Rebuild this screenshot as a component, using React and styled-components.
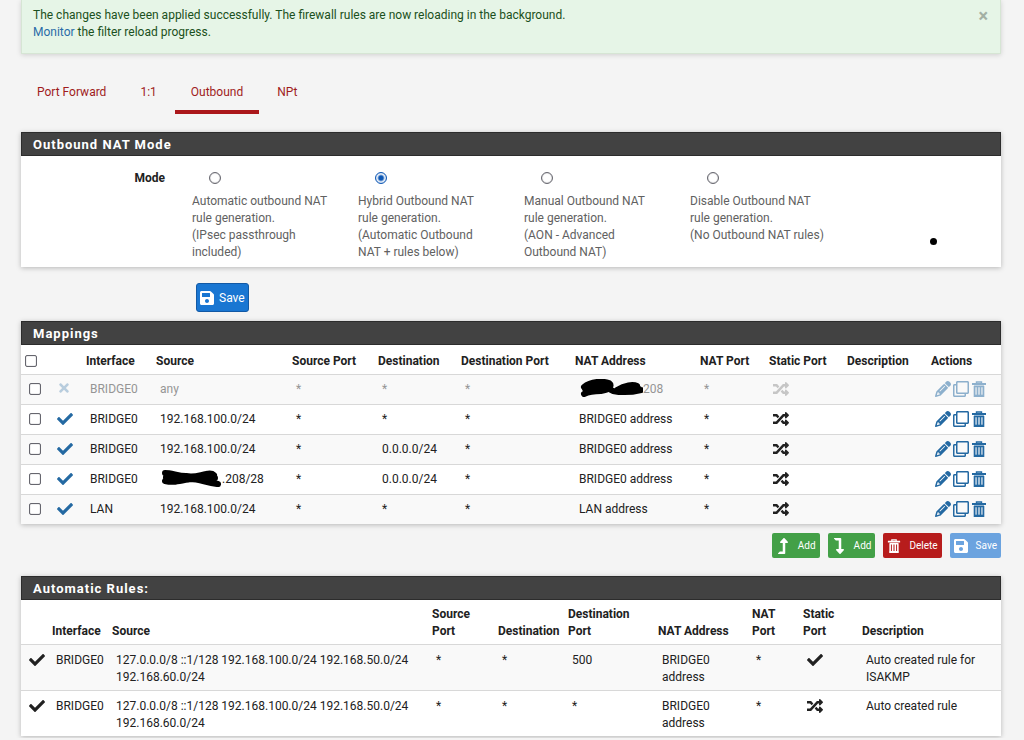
import { useState } from 'react'
import styled, { createGlobalStyle } from 'styled-components'
import {
    FaCheck,
    FaLevelDownAlt,
    FaLevelUpAlt,
    FaRandom,
    FaRegClone,
    FaSave,
    FaTimes,
} from 'react-icons/fa'
import { FaPencil } from 'react-icons/fa6'


const tabs = ['Port Forward', '1:1', 'Outbound', 'NPt']

const modes = [
    { id: 'automatic', lines: ['Automatic outbound NAT', 'rule generation.', '(IPsec passthrough', 'included)'] },
    { id: 'hybrid', lines: ['Hybrid Outbound NAT', 'rule generation.', '(Automatic Outbound', 'NAT + rules below)'] },
    { id: 'advanced', lines: ['Manual Outbound NAT', 'rule generation.', '(AON - Advanced', 'Outbound NAT)'] },
    { id: 'disabled', lines: ['Disable Outbound NAT', 'rule generation.', '(No Outbound NAT rules)'] },
]

const mappings = [
    { id: 0, disabled: true, iface: 'BRIDGE0', source: 'any', destination: '*', natAddress: '208', hidden: 'natAddress' },
    { id: 1, iface: 'BRIDGE0', source: '192.168.100.0/24', destination: '*', natAddress: 'BRIDGE0 address' },
    { id: 2, iface: 'BRIDGE0', source: '192.168.100.0/24', destination: '0.0.0.0/24', natAddress: 'BRIDGE0 address' },
    { id: 3, iface: 'BRIDGE0', source: '.208/28', destination: '0.0.0.0/24', natAddress: 'BRIDGE0 address', hidden: 'source' },
    { id: 4, iface: 'LAN', source: '192.168.100.0/24', destination: '*', natAddress: 'LAN address' },
]

const automaticSource = '127.0.0.0/8 ::1/128 192.168.100.0/24 192.168.50.0/24 192.168.60.0/24'

const automaticRules = [
    { id: 0, destinationPort: '500', isStatic: true, description: 'Auto created rule for ISAKMP' },
    { id: 1, destinationPort: '*', isStatic: false, description: 'Auto created rule' },
]

const mappingColumns = [28, 33, 70, 136, 86, 83, 114, 125, 69, 78, 84, null]
const automaticColumns = [27, 60, 320, 66, 70, 90, 94, 51, 59, null]


function Columns({ widths }) {
    return (
        <colgroup>
            {widths.map((width, index) => (
                <col key={index} style={width ? { width } : undefined} />
            ))}
        </colgroup>
    )
}


function TrashIcon() {
    return (
        <svg viewBox='0 0 16 16' fill='none' stroke='currentColor' aria-hidden='true'>
            <path d='M5.5 2.5 V1 H10.5 V2.5' strokeWidth='1.4' />
            <path d='M1 3 H15' strokeWidth='2' />
            <path d='M3.6 5 V15 H12.4 V5 M3 5.4 H13' strokeWidth='1.8' />
            <path d='M6.5 5 V15 M9.5 5 V15' strokeWidth='1.8' />
            <path d='M3 14.8 H13' strokeWidth='2.2' />
        </svg>
    )
}


function SourceScribble() {
    return (
        <Scribble width='62' height='18' viewBox='0 0 62 18' aria-hidden='true'>
            <path d='M5 4 C12 4 18 7 26 7 C34 9 40 6 46 5 C50 4 52 4 54 6 M5 12 C14 14 20 12 30 10 C40 10 46 14 57 15 M6 8 C18 9 36 9 55 9 M44 12 L58 15' />
        </Scribble>
    )
}


function AddressScribble() {
    return (
        <Scribble width='64' height='18' viewBox='0 0 64 18' aria-hidden='true'>
            <path d='M5 8 C12 2 24 2 30 4 C34 7 30 11 22 12 C14 12 9 13 5 15 M6 10 C16 7 26 7 34 12 C44 14 54 13 62 11 M38 11 C46 6 54 5 58 7 M44 10 L60 10' />
        </Scribble>
    )
}


function App() {

    // state
    const [mode, setMode] = useState('hybrid')
    const [selected, setSelected] = useState([])
    const [showAlert, setShowAlert] = useState(true)


    const handleToggle = (id) => {
        setSelected(selected.includes(id) ? selected.filter((item) => item !== id) : [...selected, id])
    }


    const handleToggleAll = () => {
        setSelected(selected.length === mappings.length ? [] : mappings.map((rule) => rule.id))
    }


    return (
        <Page>
            <GlobalStyle />

            {showAlert && (
                <Alert role='alert'>
                    <div>
                        The changes have been applied successfully. The firewall rules are now reloading in the background.
                        <br />
                        <a href='#monitor'>Monitor</a> the filter reload progress.
                    </div>
                    <CloseButton type='button' aria-label='Close' onClick={() => setShowAlert(false)}>×</CloseButton>
                </Alert>
            )}

            <Tabs>
                {tabs.map((tab) => (
                    <Tab key={tab} href='#nat' $active={tab === 'Outbound'}>{tab}</Tab>
                ))}
            </Tabs>

            <Panel>
                <PanelTitle>Outbound NAT Mode</PanelTitle>
                <ModeBody role='radiogroup' aria-labelledby='mode-label'>
                    <ModeLabel id='mode-label'>Mode</ModeLabel>
                    {modes.map((item) => (
                        <ModeOption key={item.id}>
                            <Radio
                                name='mode'
                                value={item.id}
                                checked={mode === item.id}
                                onChange={() => setMode(item.id)}
                            />
                            {item.lines.map((line) => (
                                <span key={line}>{line}</span>
                            ))}
                        </ModeOption>
                    ))}
                    <Dot />
                </ModeBody>
            </Panel>

            <SaveRow>
                <SaveButton type='button'><FaSave />Save</SaveButton>
            </SaveRow>

            <Panel>
                <PanelTitle>Mappings</PanelTitle>
                <Table>
                    <Columns widths={mappingColumns} />
                    <thead>
                        <tr>
                            <th>
                                <Checkbox
                                    aria-label='Select all'
                                    checked={selected.length === mappings.length}
                                    onChange={handleToggleAll}
                                />
                            </th>
                            <th></th>
                            <th>Interface</th>
                            <th>Source</th>
                            <th>Source Port</th>
                            <th>Destination</th>
                            <th>Destination Port</th>
                            <th>NAT Address</th>
                            <th>NAT Port</th>
                            <th>Static Port</th>
                            <th>Description</th>
                            <th>Actions</th>
                        </tr>
                    </thead>
                    <tbody>
                        {mappings.map((rule) => (
                            <MappingRow key={rule.id} $disabled={rule.disabled}>
                                <td>
                                    <Checkbox
                                        aria-label={`Select rule ${rule.id + 1}`}
                                        checked={selected.includes(rule.id)}
                                        onChange={() => handleToggle(rule.id)}
                                    />
                                </td>
                                <td>
                                    <IconLink href='#toggle' aria-label='Toggle rule'>
                                        {rule.disabled ? <FaTimes size={14} opacity={0.6} /> : <FaCheck size={16} />}
                                    </IconLink>
                                </td>
                                <td>{rule.iface}</td>
                                <td>{rule.hidden === 'source' && <SourceScribble />}{rule.source}</td>
                                <td>*</td>
                                <td>{rule.destination}</td>
                                <td>*</td>
                                <td>{rule.hidden === 'natAddress' && <AddressScribble />}{rule.natAddress}</td>
                                <td>*</td>
                                <td><StatusIcon as={FaRandom} /></td>
                                <td></td>
                                <td>
                                    <Actions>
                                        <IconLink href='#edit' aria-label='Edit'><FaPencil /></IconLink>
                                        <IconLink href='#copy' aria-label='Copy'><FaRegClone /></IconLink>
                                        <IconLink href='#delete' aria-label='Delete'><TrashIcon /></IconLink>
                                    </Actions>
                                </td>
                            </MappingRow>
                        ))}
                    </tbody>
                </Table>
            </Panel>

            <ButtonRow>
                <SmallButton type='button' $color='#43a047'><FaLevelUpAlt />Add</SmallButton>
                <SmallButton type='button' $color='#43a047'><FaLevelDownAlt />Add</SmallButton>
                <SmallButton type='button' $color='#b71c1c'><TrashIcon />Delete</SmallButton>
                <SmallButton type='button' $color='#6ba3df'><FaSave />Save</SmallButton>
            </ButtonRow>

            <Panel>
                <PanelTitle>Automatic Rules:</PanelTitle>
                <Table>
                    <Columns widths={automaticColumns} />
                    <thead>
                        <tr>
                            <th></th>
                            <th>Interface</th>
                            <th>Source</th>
                            <th>Source<br />Port</th>
                            <th>Destination</th>
                            <th>Destination<br />Port</th>
                            <th>NAT Address</th>
                            <th>NAT<br />Port</th>
                            <th>Static<br />Port</th>
                            <th>Description</th>
                        </tr>
                    </thead>
                    <tbody>
                        {automaticRules.map((rule) => (
                            <AutomaticRow key={rule.id}>
                                <td><StatusIcon as={FaCheck} /></td>
                                <td>BRIDGE0</td>
                                <td>{automaticSource}</td>
                                <td>*</td>
                                <td>*</td>
                                <td>{rule.destinationPort}</td>
                                <td>BRIDGE0<br />address</td>
                                <td>*</td>
                                <td><StatusIcon as={rule.isStatic ? FaCheck : FaRandom} /></td>
                                <td>{rule.description}</td>
                            </AutomaticRow>
                        ))}
                    </tbody>
                </Table>
            </Panel>
        </Page>
    )
}

const GlobalStyle = createGlobalStyle`
  * {
    box-sizing: border-box;
  }

  body {
    margin: 0;
    background: #f4f4f4;
    color: #212121;
    font-family: Roboto, 'Liberation Sans', sans-serif;
    font-size: 12px;
    line-height: 17px;
  }

  a {
    color: #2a6ca8;
    text-decoration: none;
  }

  button,
  input {
    font: inherit;
    margin: 0;
  }
`

const Page = styled.div`
  padding: 0 23px 2px 21px;
`

const Alert = styled.div`
  display: flex;
  justify-content: space-between;
  align-items: flex-start;
  padding: 7px 12px 12px 11px;
  background: #e6f5e7;
  border: 1px solid #d6e5d4;
  border-top: 0;
  color: #1b5020;
  box-shadow: 0 1px 5px rgba(0, 0, 0, 0.15);
`

const CloseButton = styled.button`
  padding: 0;
  border: 0;
  background: none;
  color: #a3b0a4;
  font-size: 18px;
  font-weight: 700;
  line-height: 18px;
  cursor: pointer;
`

const Tabs = styled.nav`
  display: flex;
  gap: 2px;
  margin: 20px 0 18px;
`

const Tab = styled.a`
  padding: 10px 16px 9px;
  border-bottom: 4px solid ${props => props.$active ? '#ab171b' : 'transparent'};
  color: #a01c1c;
`

const Panel = styled.section`
  background: #fff;
  box-shadow: 0 1px 5px rgba(0, 0, 0, 0.25);
`

const PanelTitle = styled.h2`
  height: 24px;
  margin: 0;
  padding: 0 11px;
  background: #424242;
  border: 1px solid #2c2c2c;
  color: #fff;
  font-size: 13px;
  font-weight: 700;
  letter-spacing: 1px;
  line-height: 23px;
`

const ModeBody = styled.div`
  position: relative;
  display: grid;
  grid-template-columns: 171px repeat(4, 166px);
  padding: 14px 0 6px;
`

const ModeLabel = styled.div`
  padding-right: 27px;
  font-weight: 700;
  text-align: right;
`

const ModeOption = styled.label`
  display: flex;
  flex-direction: column;
  color: #616161;
`

const Radio = styled.input.attrs({ type: 'radio' })`
  appearance: none;
  width: 12px;
  height: 12px;
  margin: 2px 17px 9px;
  border: 1px solid ${props => props.checked ? '#0d57b5' : '#66666e'};
  border-radius: 50%;
  background: ${props => props.checked ? 'radial-gradient(circle, #0d57b5 2px, #fff 4px)' : '#fff'};
  box-shadow: inset 0 0 1px ${props => props.checked ? '#0d57b5' : '#66666e'};
`

const Dot = styled.span`
  position: absolute;
  right: 64px;
  bottom: 22px;
  width: 7px;
  height: 7px;
  border-radius: 50%;
  background: #000;
`

const SaveRow = styled.div`
  padding: 16px 0 9px 175px;
`

const SaveButton = styled.button`
  display: flex;
  align-items: center;
  gap: 4px;
  height: 29px;
  padding: 1px 3px 0 2px;
  border: 1px solid #1259a5;
  border-radius: 3px;
  background: #1976d2;
  color: #fff;

  svg {
    width: 16px;
    height: 16px;
  }
`

const Table = styled.table`
  width: 100%;
  table-layout: fixed;
  border-spacing: 0;

  th {
    height: 29px;
    padding: 6px 0 4px 4px;
    font-weight: 700;
    text-align: left;
    vertical-align: bottom;
    white-space: nowrap;
  }

  td {
    padding: 6px 0 5px 8px;
    border-top: 1px solid #d8d8d8;
    vertical-align: top;
  }

  tbody tr:nth-child(odd) {
    background: #f9f9f9;
  }
`

const MappingRow = styled.tr`
  color: ${props => props.$disabled ? '#959595' : 'inherit'};

  td {
    height: 30px;
    white-space: nowrap;
  }

  td > svg,
  a {
    opacity: ${props => props.$disabled ? 0.5 : 1};
  }
`

const AutomaticRow = styled.tr`
  td {
    height: 46px;
    padding: 7px 0 4px 8px;
  }
`

const Checkbox = styled.input.attrs({ type: 'checkbox' })`
  appearance: none;
  display: block;
  width: 12px;
  height: 12px;
  margin: 2px 0 3px;
  border: 1px solid #66666e;
  border-radius: 2px;
  background: ${props => props.checked ? '#0d57b5' : '#fff'};
  box-shadow: inset 0 0 1px #66666e;
`

const IconLink = styled.a`
  display: flex;
  color: #2469a2;
`

const Actions = styled.div`
  display: flex;
  gap: 2px;

  svg {
    width: 16px;
    height: 16px;
  }
`

const StatusIcon = styled.svg`
  display: block;
  width: 16px;
  height: 16px;
`

const Scribble = styled.svg`
  && {
    opacity: 1;
  }
  margin: -2px 0 -3px;
  vertical-align: top;
  fill: none;
  stroke: #000;
  stroke-width: 6;
  stroke-linecap: round;
  stroke-linejoin: round;
`

const ButtonRow = styled.div`
  display: flex;
  justify-content: flex-end;
  gap: 8px;
  padding: 9px 0 18px;
`

const SmallButton = styled.button`
  display: flex;
  align-items: center;
  gap: 8px;
  height: 25px;
  padding: 0 4px;
  border: 0;
  border-radius: 2px;
  background: ${props => props.$color};
  color: #fff;
  font-size: 10px;

  svg {
    width: 14px;
    height: 16px;
  }
`

export default App
